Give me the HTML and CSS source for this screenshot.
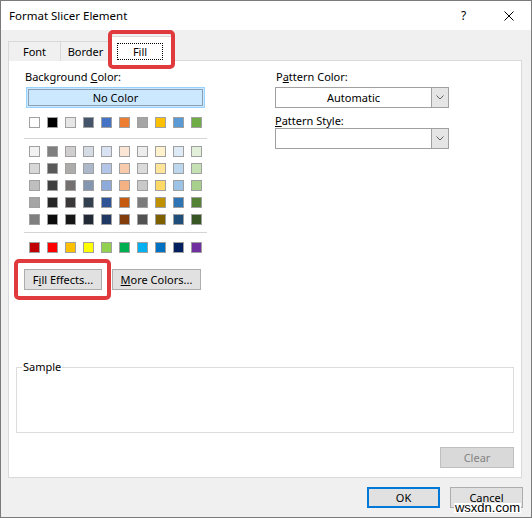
FILE: index.html
```html
<!DOCTYPE html>
<html lang="en">
<head>
  <meta charset="UTF-8">
  <title>Format Slicer Element</title>
  <link rel="stylesheet" href="styles.css">
</head>
<body>
  <div class="dialog">
    <div class="titlebar">
      <span class="title">Format Slicer Element</span>
      <span class="caption-btn help">?</span>
      <span class="caption-btn">
        <svg width="10" height="10" viewBox="0 0 10 10"><path d="M0.5 0.5L9.5 9.5M9.5 0.5L0.5 9.5" stroke="#000" stroke-width="1" fill="none"/></svg>
      </span>
    </div>

    <div class="main">
      <div class="tabs">
        <div class="tab tab-font">Font</div>
        <div class="tab tab-border">Border</div>
        <div class="tab active">
          <span class="focus">Fill</span>
          <span class="mark mark-tab"></span>
        </div>
      </div>

      <div class="panel">
        <div class="columns">
          <div class="col-left">
            <div class="label">Background <u>C</u>olor:</div>
            <div class="no-color"><span>No Color</span></div>
            <div class="swatch-row" id="themeRow"></div>
            <hr class="sep">
            <div class="swatch-grid" id="tintGrid"></div>
            <hr class="sep sep-low">
            <div class="swatch-row" id="standardRow"></div>
            <div class="btn-row">
              <div class="mark-wrap">
                <button class="btn btn-fill">F<u>i</u>ll Effects...</button>
                <span class="mark mark-btn"></span>
              </div>
              <button class="btn btn-more"><u>M</u>ore Colors...</button>
            </div>
          </div>

          <div class="col-right">
            <div class="label">P<u>a</u>ttern Color:</div>
            <div class="dropdown">
              <span class="dropdown-text">Automatic</span>
              <span class="dropdown-arrow">
                <svg width="8" height="5" viewBox="0 0 8 5"><path d="M0.5 0.5L4 4L7.5 0.5" stroke="#606060" stroke-width="1" fill="none"/></svg>
              </span>
            </div>
            <div class="label label-second"><u>P</u>attern Style:</div>
            <div class="dropdown">
              <span class="dropdown-text"></span>
              <span class="dropdown-arrow">
                <svg width="8" height="5" viewBox="0 0 8 5"><path d="M0.5 0.5L4 4L7.5 0.5" stroke="#606060" stroke-width="1" fill="none"/></svg>
              </span>
            </div>
          </div>
        </div>

        <fieldset class="sample">
          <legend>Sample</legend>
        </fieldset>

        <div class="clear-row">
          <button class="btn btn-dialog" disabled>Clear</button>
        </div>
      </div>

      <div class="footer">
        <button class="btn btn-dialog btn-default">OK</button>
        <button class="btn btn-dialog">Cancel</button>
        <span class="watermark">wsxdn.com</span>
      </div>
    </div>
  </div>

  <script>
    const themeColors = ['#FFFFFF', '#000000', '#E7E6E6', '#44546A', '#4472C4', '#ED7D31', '#A5A5A5', '#FFC000', '#5B9BD5', '#70AD47'];

    const tintColors = [
      ['#F2F2F2', '#7F7F7F', '#D0CECE', '#D6DCE4', '#D9E2F3', '#FBE5D5', '#EDEDED', '#FFF2CC', '#DEEBF6', '#E2EFD9'],
      ['#D8D8D8', '#595959', '#AEABAB', '#ADB9CA', '#B4C6E7', '#F7CBAC', '#DBDBDB', '#FEE599', '#BDD7EE', '#C5E0B3'],
      ['#BFBFBF', '#3F3F3F', '#757070', '#8496B0', '#8EAADB', '#F4B183', '#C9C9C9', '#FFD965', '#9CC3E5', '#A8D08D'],
      ['#A5A5A5', '#262626', '#3A3838', '#323F4F', '#2F5496', '#C55A11', '#7B7B7B', '#BF9000', '#2E75B5', '#538135'],
      ['#7F7F7F', '#0C0C0C', '#171616', '#222A35', '#1F3864', '#833C0B', '#525252', '#7F6000', '#1E4E79', '#375623']
    ];

    const standardColors = ['#C00000', '#FF0000', '#FFC000', '#FFFF00', '#92D050', '#00B050', '#00B0F0', '#0070C0', '#002060', '#7030A0'];

    function fillRow(row, colors) {
      colors.forEach(color => {
        const swatch = document.createElement('span');
        swatch.classList.add('swatch');
        swatch.style.background = color;
        row.appendChild(swatch);
      });
    }

    fillRow(document.getElementById('themeRow'), themeColors);
    fillRow(document.getElementById('standardRow'), standardColors);

    const tintGrid = document.getElementById('tintGrid');
    tintColors.forEach(colors => {
      const row = document.createElement('div');
      row.classList.add('swatch-row');
      fillRow(row, colors);
      tintGrid.appendChild(row);
    });
  </script>
</body>
</html>
```

FILE: styles.css
```css
body {
  margin: 0;
  font-family: 'Segoe UI', 'Noto Sans', sans-serif;
  font-size: 11px;
  color: #000;
  background: #f0f0f0;
}

.dialog {
  width: 532px;
  height: 518px;
  box-sizing: border-box;
  border: 1px solid #7a7a7a;
  background: #f0f0f0;
  display: flex;
  flex-direction: column;
}

/* title bar */
.titlebar {
  height: 29px;
  background: #fff;
  display: flex;
  align-items: center;
  padding-left: 8px;
  flex-shrink: 0;
  font-size: 11.5px;
}

.title {
  flex: 1;
}

.caption-btn {
  width: 45px;
  height: 29px;
  display: flex;
  align-items: center;
  justify-content: center;
}

.help {
  font-size: 12px;
}

.main {
  flex: 1;
  display: flex;
  flex-direction: column;
  min-height: 0;
}

/* tabs */
.tabs {
  display: flex;
  align-items: flex-end;
  padding: 6px 0 0 7px;
  margin-bottom: -1px;
  position: relative;
  z-index: 1;
}

.tab {
  height: 20px;
  box-sizing: border-box;
  border: 1px solid #d9d9d9;
  border-bottom: none;
  margin-right: -1px;
  display: flex;
  align-items: center;
  justify-content: center;
  background: #f0f0f0;
}

.tab-font {
  width: 53px;
}

.tab-border {
  width: 51px;
}

.tab.active {
  position: relative;
  height: 25px;
  width: 62px;
  background: #fff;
}

.focus {
  width: 46px;
  height: 17px;
  box-sizing: border-box;
  border: 1px dotted #000;
  display: flex;
  align-items: center;
  justify-content: center;
  margin-top: 5px;
  margin-left: -2px;
}

.mark {
  position: absolute;
  border: 4px solid #e03a3e;
  border-radius: 5px;
  pointer-events: none;
}

.mark-tab {
  left: -3px;
  right: -4px;
  top: -7px;
  bottom: -8px;
}

/* panel */
.panel {
  flex: 1;
  margin: 0 9px 0 7px;
  background: #fff;
  border: 1px solid #d9d9d9;
  padding: 8px 7px 9px;
  display: flex;
  flex-direction: column;
}

.columns {
  display: flex;
  gap: 68px;
  padding-left: 8px;
}

.col-left {
  width: 183px;
}

.label {
  line-height: 16px;
  padding-left: 1px;
}

.label-second {
  margin-top: 5px;
  line-height: 15px;
  padding-left: 0;
}

.no-color {
  margin: 2px 0 0 2px;
  width: 179px;
  height: 21px;
  box-sizing: border-box;
  border: 1px solid #99d1ff;
  background: #cce8ff;
  padding: 1px;
}

.no-color span {
  display: flex;
  height: 100%;
  box-sizing: border-box;
  border: 1px solid #8aa0b4;
  align-items: center;
  justify-content: center;
}

.swatch-row {
  display: flex;
  justify-content: center;
  gap: 7px;
}

#themeRow {
  margin-top: 9px;
}

.swatch {
  width: 11px;
  height: 11px;
  box-sizing: border-box;
  border: 1px solid #a0a0a0;
}

.sep {
  border: 0;
  height: 1px;
  background: #d4d4d4;
  margin: 10px 0 0;
}

.sep-low {
  margin-top: 7px;
}

.swatch-grid {
  margin-top: 7px;
  display: flex;
  flex-direction: column;
  gap: 6px;
}

#standardRow {
  margin-top: 9px;
}

.btn-row {
  display: flex;
  gap: 10px;
  margin-top: 16px;
}

.mark-wrap {
  position: relative;
  display: flex;
}

.mark-btn {
  left: -10px;
  right: -9px;
  top: -10px;
  bottom: -10px;
}

.btn {
  height: 21px;
  box-sizing: border-box;
  background: #e1e1e1;
  border: 1px solid #adadad;
  font-family: inherit;
  font-size: 11px;
  color: #000;
  padding: 0;
}

.btn-fill {
  width: 78px;
}

.btn-more {
  width: 89px;
}

.btn-dialog {
  width: 73px;
}

.btn:disabled {
  background: #d9d9d9;
  border-color: #bfbfbf;
  color: #838383;
}

/* right column */
.col-right {
  width: 174px;
}

.dropdown {
  margin-top: 2px;
  height: 21px;
  box-sizing: border-box;
  border: 1px solid #a0a0a0;
  background: #fff;
  display: flex;
}

.label-second + .dropdown {
  margin-top: 0;
}

.dropdown-text {
  flex: 1;
  display: flex;
  align-items: center;
  justify-content: center;
}

.dropdown-arrow {
  width: 16px;
  background: #e5e5e5;
  border-left: 1px solid #a0a0a0;
  display: flex;
  align-items: center;
  justify-content: center;
}

/* sample */
.sample {
  margin: auto 0 0;
  padding: 0;
  height: 73px;
  box-sizing: border-box;
  border: 1px solid #dcdcdc;
}

.sample legend {
  margin-left: 5px;
  padding: 0 1px;
  line-height: 14px;
}

.clear-row {
  display: flex;
  justify-content: flex-end;
  margin-top: 14px;
}

.clear-row .btn {
  width: 74px;
}

/* footer */
.footer {
  position: relative;
  display: flex;
  justify-content: flex-end;
  gap: 10px;
  padding: 9px 8px 9px 0;
}

.btn-default {
  border: 2px solid #0078d7;
}

.watermark {
  position: absolute;
  right: 10px;
  bottom: 4px;
  background: #fff;
  font-family: 'Liberation Sans', Arial, sans-serif;
  font-size: 13px;
  line-height: 10px;
  padding: 0 1px;
}
```
